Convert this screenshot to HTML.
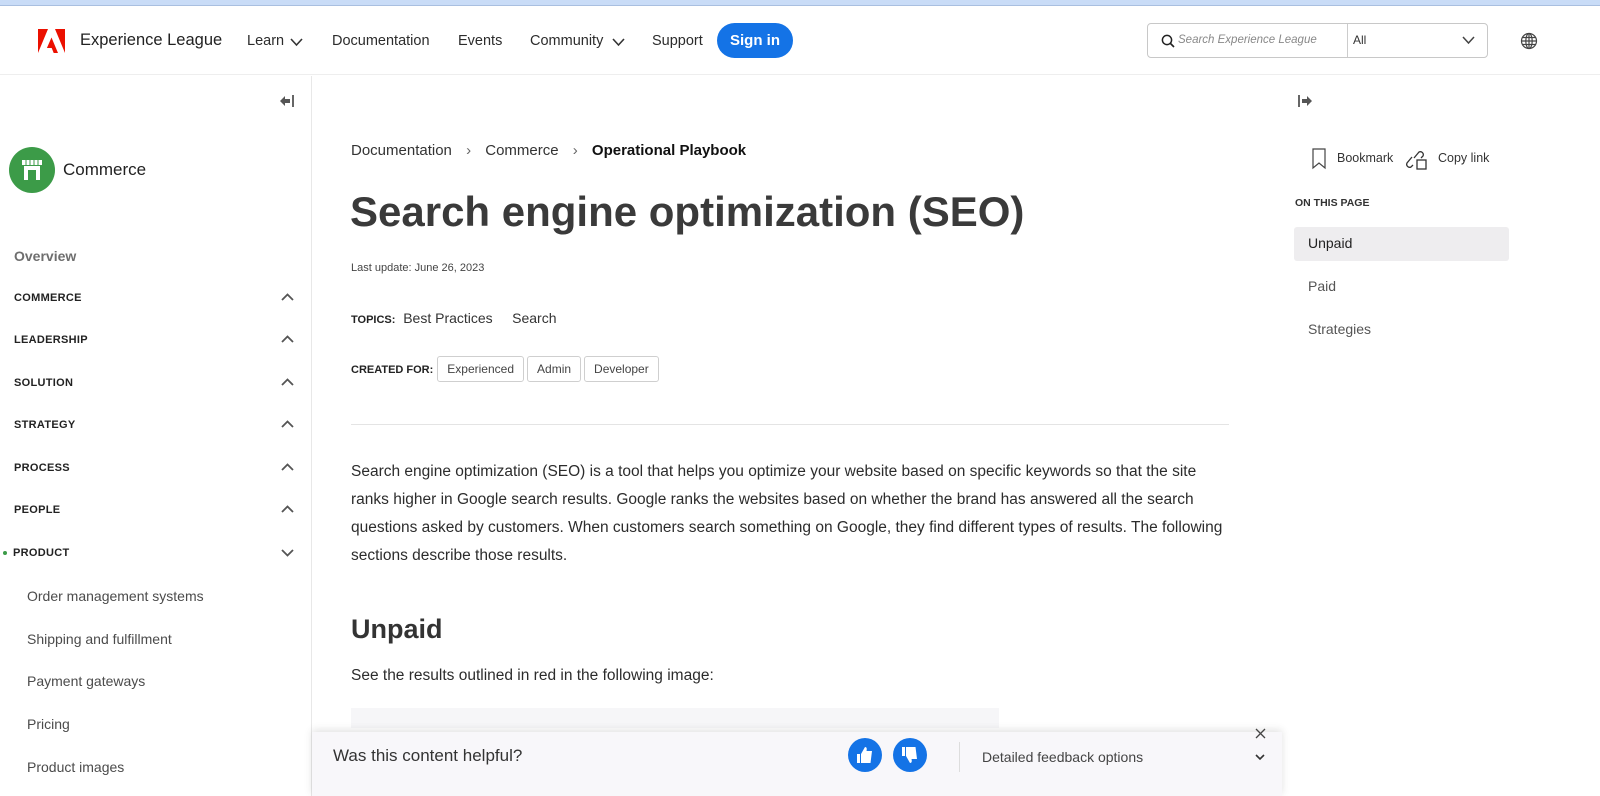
<!DOCTYPE html>
<html><head><meta charset="utf-8">
<style>
*{box-sizing:border-box;margin:0;padding:0}
body{width:1600px;height:796px;overflow:hidden;background:#fff;font-family:"Liberation Sans",sans-serif;color:#2c2c2c;position:relative}
.topstrip{position:absolute;left:0;top:0;width:1600px;height:6px;background:#c9dcf7;border-bottom:1px solid #a9bfe0}
header{position:absolute;top:6px;left:0;width:1600px;height:69px;border-bottom:1px solid #eee;background:#fff}
.a{position:absolute}
.nav{font-size:14.5px;color:#2c2c2c}
.signin{background:#1473e6;color:#fff;font-weight:bold;font-size:15px;border-radius:18px;width:76px;height:35px;line-height:35px;text-align:center}
.search{left:1147px;top:17px;width:341px;height:35px;border:1px solid #c8c8c8;border-radius:4px}
.side{left:0;top:76px;width:312px;height:720px;border-right:1px solid #e8e8e8}
.sec{position:absolute;left:14px;font-size:11px;font-weight:bold;letter-spacing:.3px;color:#222}
.chev{position:absolute;left:281px}
.sub{position:absolute;left:27px;font-size:14px;color:#4b4b4b}
.tag{display:inline-block;border:1px solid #cfcfcf;border-radius:3px;font-size:12px;padding:0 9px;height:26px;line-height:24px;color:#444;margin-right:3px}
p.body{font-size:15.5px;line-height:28px;color:#2c2c2c}
</style></head><body>
<div class="topstrip"></div>
<header>
 <svg class="a" style="left:38px;top:23px" width="27" height="24" viewBox="0 0 27 24"><path d="M0 0h10L0 24z M17 0h10v24z M13.5 8.5L20 24h-4.3l-2-5h-4.8z" fill="#eb1000"/></svg>
 <div class="a" style="left:80px;top:25px;font-size:16.5px;color:#222">Experience League</div>
 <div class="a nav" style="left:247px;top:27px">Learn</div>
 <svg class="a" style="left:290px;top:32px" width="13" height="9"><path d="M1 1l5.5 6L12 1" stroke="#333" stroke-width="1.6" fill="none"/></svg>
 <div class="a nav" style="left:332px;top:27px">Documentation</div>
 <div class="a nav" style="left:458px;top:27px">Events</div>
 <div class="a nav" style="left:530px;top:27px">Community</div>
 <svg class="a" style="left:612px;top:32px" width="13" height="9"><path d="M1 1l5.5 6L12 1" stroke="#333" stroke-width="1.6" fill="none"/></svg>
 <div class="a nav" style="left:652px;top:27px">Support</div>
 <div class="a signin" style="left:717px;top:17px">Sign in</div>
 <div class="a search">
  <svg class="a" style="left:13px;top:10px" width="14" height="14"><circle cx="6" cy="6" r="4.6" stroke="#222" stroke-width="1.5" fill="none"/><path d="M9.5 9.5L13 13" stroke="#222" stroke-width="1.6"/></svg>
  <div class="a" style="left:30px;top:10px;font-size:11.5px;font-style:italic;color:#888">Search Experience League</div>
  <div class="a" style="left:199px;top:0;width:1px;height:33px;background:#ccc"></div>
  <div class="a" style="left:205px;top:9px;font-size:12px;color:#333">All</div>
  <svg class="a" style="left:314px;top:12px" width="13" height="9"><path d="M1 1l5.5 6L12 1" stroke="#444" stroke-width="1.5" fill="none"/></svg>
 </div>
 <svg class="a" style="left:1520px;top:26px" width="18" height="18" viewBox="0 0 18 18" fill="none" stroke="#444" stroke-width="1.2"><circle cx="9" cy="9" r="7.5"/><ellipse cx="9" cy="9" rx="3.2" ry="7.5"/><path d="M1.5 9h15M2.5 5.5h13M2.5 12.5h13M9 1.5v15"/></svg>
</header>

<div class="a side">
 <svg class="a" style="left:279px;top:18px" width="16" height="14"><path d="M14 1v12" stroke="#555" stroke-width="1.8"/><path d="M1 7l5-5v3h5v4H6v3z" fill="#555"/></svg>
 <div class="a" style="left:9px;top:71px;width:46px;height:46px;border-radius:50%;background:#3c9b48"></div>
 <svg class="a" style="left:20px;top:82px" width="24" height="24" viewBox="0 0 24 24"><path d="M2 2h20v5H2z" fill="#fff"/><path d="M4 8h16v14H4z" fill="#fff"/><path d="M8 12h8v10H8z" fill="#3c9b48"/><path d="M6 2v5M10 2v5M14 2v5M18 2v5" stroke="#3c9b48" stroke-width="1"/></svg>
 <div class="a" style="left:63px;top:84px;font-size:17px;color:#222">Commerce</div>
 <div class="a" style="left:14px;top:172px;font-size:14px;font-weight:bold;color:#6e6e6e">Overview</div>
 <div class="sec" style="top:216px">COMMERCE</div>
 <div class="sec" style="top:258px">LEADERSHIP</div>
 <div class="sec" style="top:301px">SOLUTION</div>
 <div class="sec" style="top:343px">STRATEGY</div>
 <div class="sec" style="top:386px">PROCESS</div>
 <div class="sec" style="top:428px">PEOPLE</div>
 <div class="a" style="left:3px;top:475px;width:4px;height:4px;border-radius:50%;background:#3c9b48"></div>
 <div class="sec" style="top:471px;left:13px">PRODUCT</div>
 <svg class="chev" style="top:217px" width="13" height="8"><path d="M1 7l5.5-5.5L12 7" stroke="#555" stroke-width="1.8" fill="none"/></svg>
 <svg class="chev" style="top:259px" width="13" height="8"><path d="M1 7l5.5-5.5L12 7" stroke="#555" stroke-width="1.8" fill="none"/></svg>
 <svg class="chev" style="top:302px" width="13" height="8"><path d="M1 7l5.5-5.5L12 7" stroke="#555" stroke-width="1.8" fill="none"/></svg>
 <svg class="chev" style="top:344px" width="13" height="8"><path d="M1 7l5.5-5.5L12 7" stroke="#555" stroke-width="1.8" fill="none"/></svg>
 <svg class="chev" style="top:387px" width="13" height="8"><path d="M1 7l5.5-5.5L12 7" stroke="#555" stroke-width="1.8" fill="none"/></svg>
 <svg class="chev" style="top:429px" width="13" height="8"><path d="M1 7l5.5-5.5L12 7" stroke="#555" stroke-width="1.8" fill="none"/></svg>
 <svg class="chev" style="top:473px" width="13" height="8"><path d="M1 1l5.5 5.5L12 1" stroke="#555" stroke-width="1.8" fill="none"/></svg>
 <div class="sub" style="top:512px">Order management systems</div>
 <div class="sub" style="top:555px">Shipping and fulfillment</div>
 <div class="sub" style="top:597px">Payment gateways</div>
 <div class="sub" style="top:640px">Pricing</div>
 <div class="sub" style="top:683px">Product images</div>
</div>

<div class="a" style="left:351px;top:142px;font-size:15px;color:#333">Documentation <span style="margin:0 10px;color:#666">›</span> Commerce <span style="margin:0 10px;color:#666">›</span> <b style="color:#111">Operational Playbook</b></div>
<div class="a" style="left:350px;top:188px;font-size:42px;font-weight:600;color:#3a3a3a">Search engine optimization (SEO)</div>
<div class="a" style="left:351px;top:262px;font-size:11px;color:#444">Last update: June 26, 2023</div>
<div class="a" style="left:351px;top:310px;font-size:14px;color:#333"><b style="font-size:11px;color:#222">TOPICS:</b>&nbsp; Best Practices &nbsp;&nbsp;&nbsp; Search</div>
<div class="a" style="left:351px;top:356px;font-size:11px"><b style="color:#222;margin-right:4px">CREATED FOR:</b><span class="tag">Experienced</span><span class="tag">Admin</span><span class="tag">Developer</span></div>
<div class="a" style="left:351px;top:424px;width:878px;height:1px;background:#e4e4e4"></div>
<p class="a body" style="left:351px;top:458px;width:880px">Search engine optimization (SEO) is a tool that helps you optimize your website based on specific keywords so that the site ranks higher in Google search results. Google ranks the websites based on whether the brand has answered all the search questions asked by customers. When customers search something on Google, they find different types of results. The following sections describe those results.</p>
<div class="a" style="left:351px;top:614px;font-size:27px;font-weight:bold;color:#333">Unpaid</div>
<div class="a" style="left:351px;top:667px;font-size:15.5px;color:#2c2c2c">See the results outlined in red in the following image:</div>
<div class="a" style="left:351px;top:708px;width:648px;height:20px;background:#f6f6f8"></div>

<svg class="a" style="left:1297px;top:94px" width="16" height="14"><path d="M2 1v12" stroke="#555" stroke-width="1.8"/><path d="M15 7l-5-5v3H5v4h5v3z" fill="#555"/></svg>
<svg class="a" style="left:1312px;top:148px" width="14" height="22"><path d="M1 1h12v19l-6-5-6 5z" stroke="#444" stroke-width="1.2" fill="none"/></svg>
<div class="a" style="left:1337px;top:151px;font-size:12.5px;color:#333">Bookmark</div>
<svg class="a" style="left:1405px;top:149px" width="22" height="21" viewBox="0 0 22 21" fill="none" stroke="#333" stroke-width="1.3"><path d="M9 9l5-6a3 3 0 014 4l-2 2"/><path d="M7 8l-5 6a3 3 0 004 4l2-2"/><rect x="12" y="11" width="9" height="9"/></svg>
<div class="a" style="left:1438px;top:151px;font-size:12.5px;color:#333">Copy link</div>
<div class="a" style="left:1295px;top:197px;font-size:10.5px;font-weight:bold;color:#333">ON THIS PAGE</div>
<div class="a" style="left:1294px;top:227px;width:215px;height:34px;background:#eeedef;border-radius:3px"></div>
<div class="a" style="left:1308px;top:235px;font-size:14px;color:#222">Unpaid</div>
<div class="a" style="left:1308px;top:278px;font-size:14px;color:#555">Paid</div>
<div class="a" style="left:1308px;top:321px;font-size:14px;color:#555">Strategies</div>

<div class="a" style="left:312px;top:732px;width:970px;height:64px;background:#f8f7fa;box-shadow:0 -2px 8px rgba(0,0,0,.12)">
 <div class="a" style="left:21px;top:14px;font-size:17px;color:#333">Was this content helpful?</div>
 <div class="a" style="left:536px;top:6px;width:34px;height:34px;border-radius:50%;background:#1473e6"></div>
 <svg class="a" style="left:544px;top:14px" width="18" height="18" viewBox="0 0 18 18"><path d="M1 8h3v9H1zM5 8l4-7c2 0 2 2 1.5 4H16l-1.5 12H5z" fill="#fff"/></svg>
 <div class="a" style="left:581px;top:6px;width:34px;height:34px;border-radius:50%;background:#1473e6"></div>
 <svg class="a" style="left:589px;top:14px" width="18" height="18" viewBox="0 0 18 18"><path d="M1 1h3v9H1zM5 1h9.5L16 13h-5.5c.5 2 .5 4-1.5 4L5 10z" fill="#fff"/></svg>
 <div class="a" style="left:647px;top:10px;width:1px;height:30px;background:#ddd"></div>
 <div class="a" style="left:670px;top:17px;font-size:14px;color:#444">Detailed feedback options</div>
 <svg class="a" style="left:943px;top:-4px" width="11" height="11"><path d="M1 1l9 9M10 1l-9 9" stroke="#444" stroke-width="1.3"/></svg>
 <svg class="a" style="left:943px;top:22px" width="10" height="7"><path d="M1 1l4 4 4-4" stroke="#333" stroke-width="1.6" fill="none"/></svg>
</div>
</body></html>
